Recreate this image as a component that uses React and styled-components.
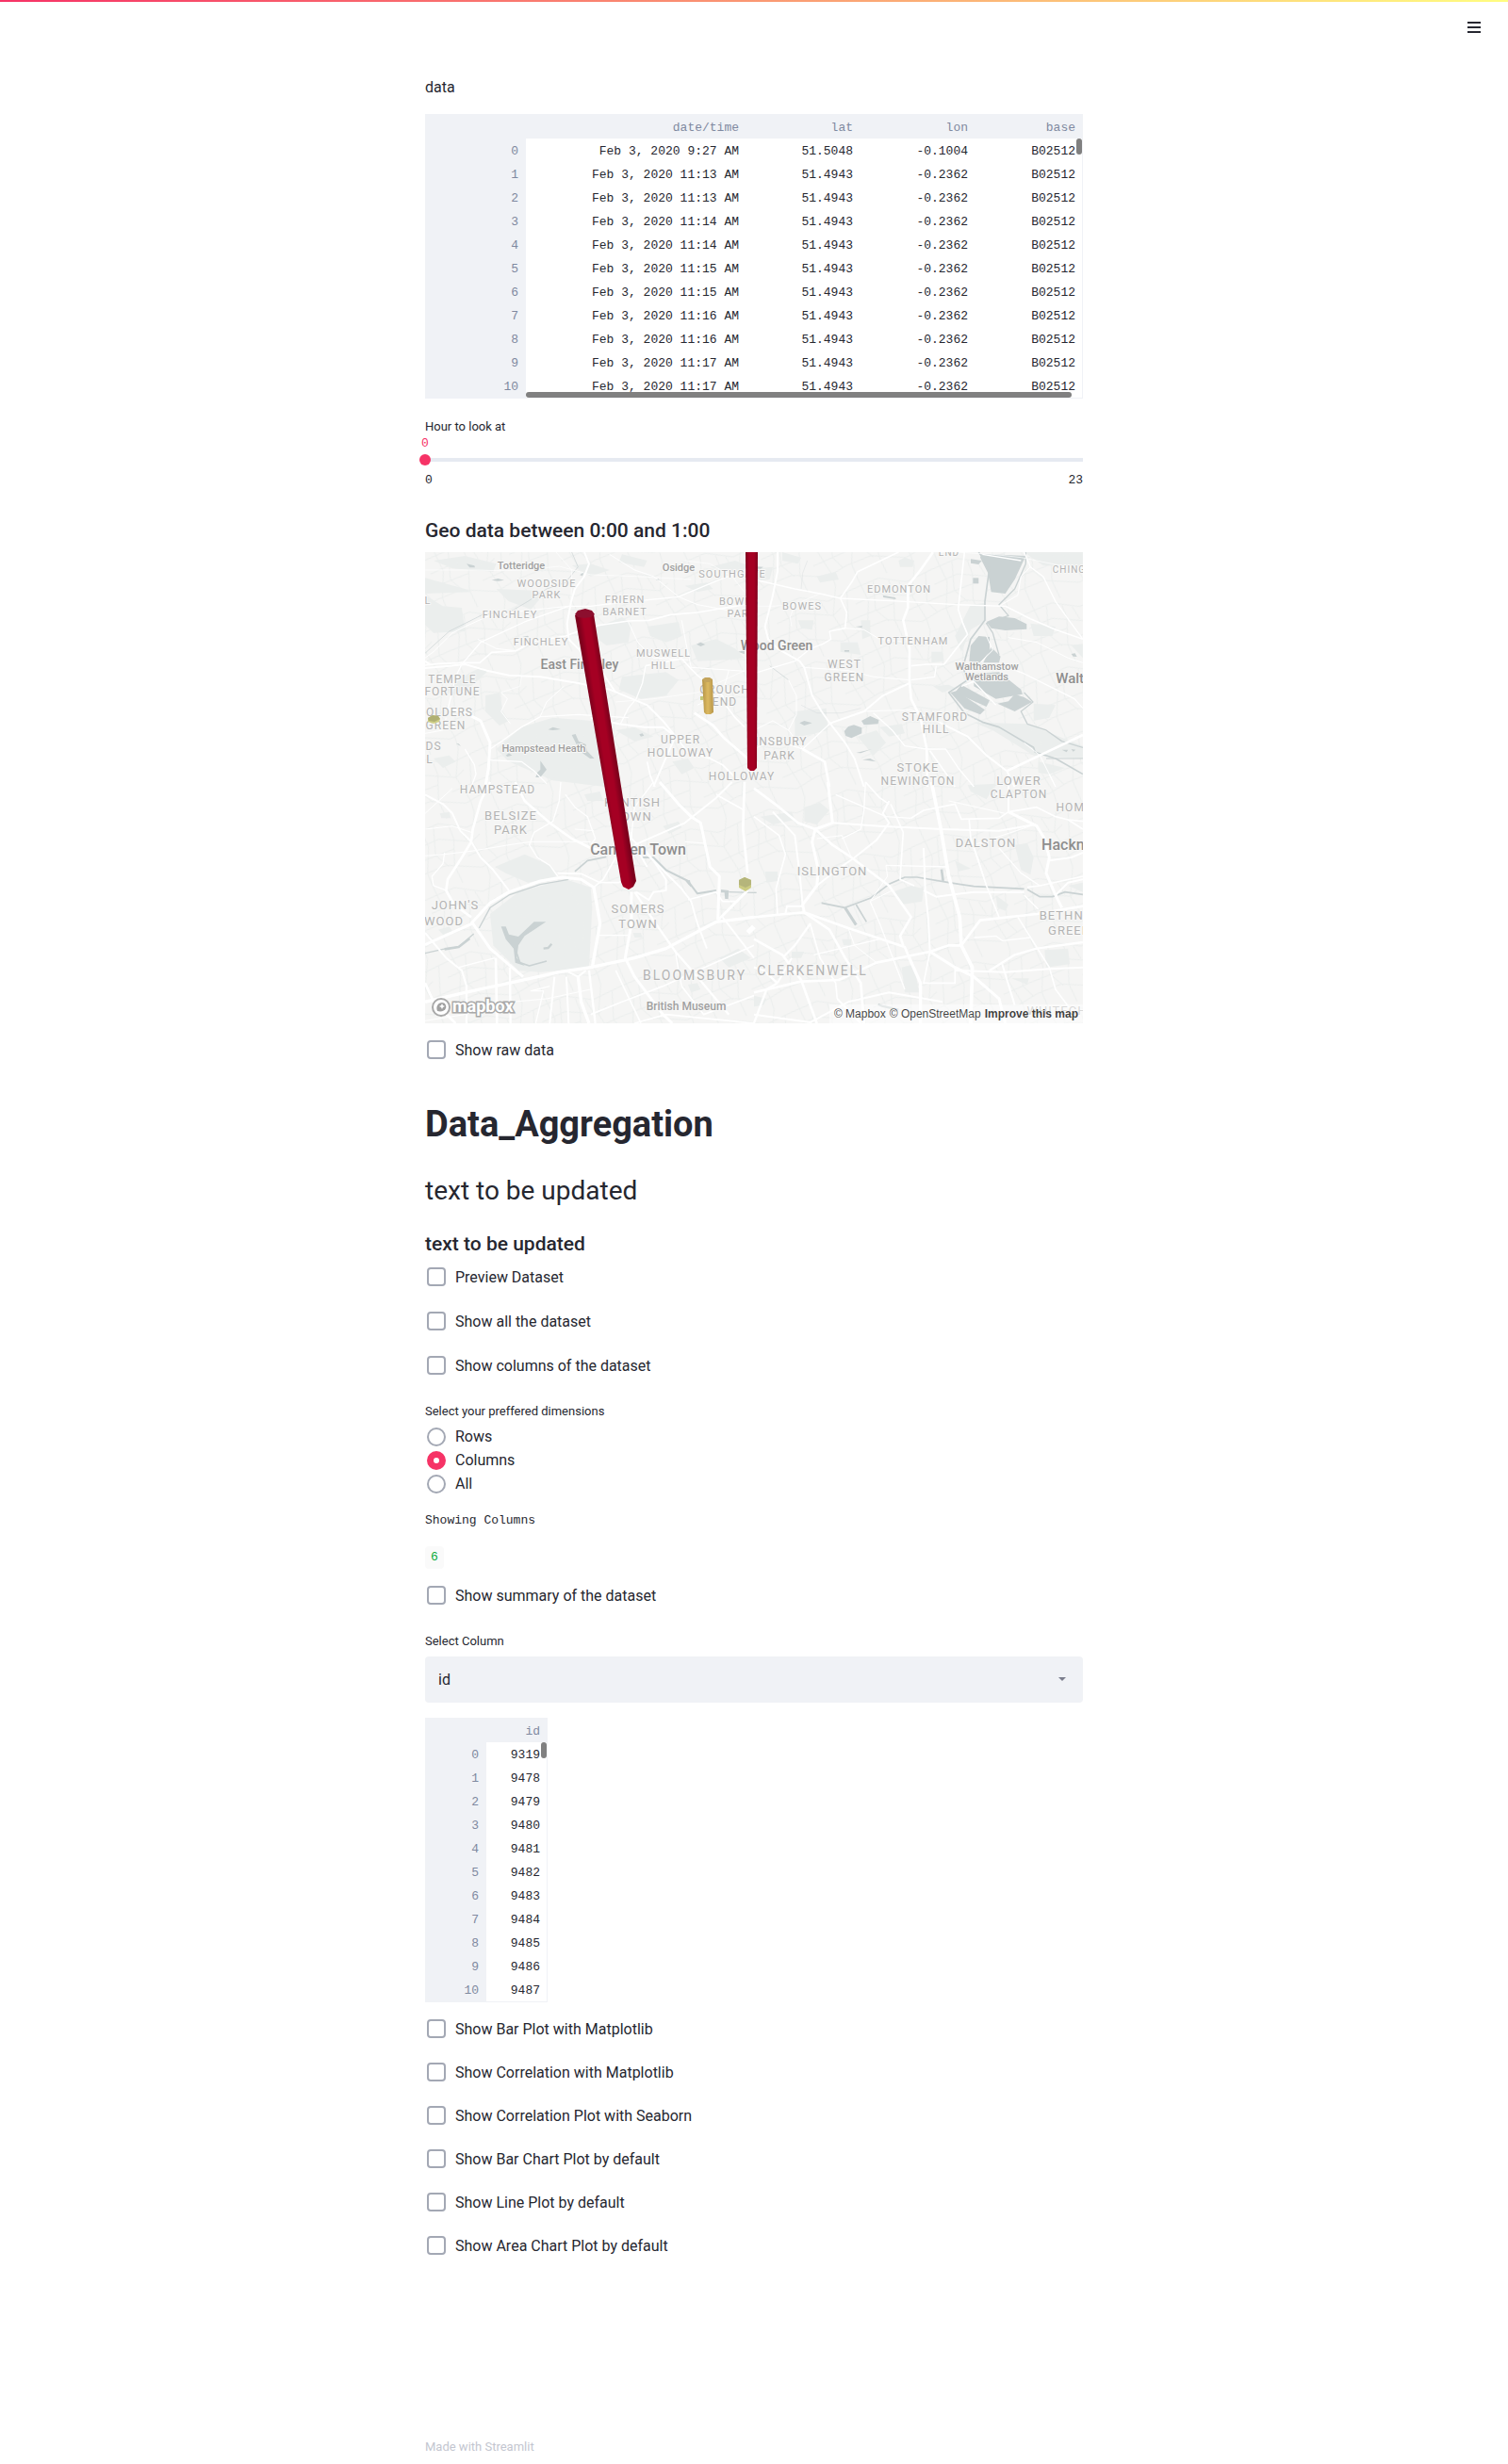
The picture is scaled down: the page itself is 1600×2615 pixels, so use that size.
import React, { useState } from "react";
import styled, { createGlobalStyle } from "styled-components";

const sans = `Roboto, "Open Sans", "Liberation Sans", sans-serif`;
const mono = `"Liberation Mono", "DejaVu Sans Mono", monospace`;
const ink = "#262730";
const panel = "#f0f2f6";
const accent = "#f63366";
const outline = "#a3a8b4";

const GlobalStyle = createGlobalStyle`
  *, *::before, *::after { box-sizing: border-box; }
  body { margin: 0; background: #fff; color: ${ink}; font: 400 16px/24px ${sans}; }
  h1, h3, p, fieldset { margin: 0; padding: 0; border: 0; }
`;

const Page = styled.div`
  display: flex;
  flex-direction: column;
  min-height: 100vh;
`;

const Header = styled.header`
  display: flex;
  justify-content: flex-end;
  align-items: flex-start;
  height: 57px;
  padding: 12px 24px 0;
  background: linear-gradient(to right, ${accent}, #fffd80) top / 100% 2px no-repeat;
`;

const MenuButton = styled.button`
  display: flex;
  padding: 8px 5px;
  border: 0;
  background: none;
  color: ${ink};
`;

const Main = styled.main`
  display: flex;
  flex: 1;
  flex-direction: column;
  gap: 16px;
  width: 100%;
  max-width: 730px;
  margin: 0 auto;
  padding: 24px 16px 0;
`;

const Title = styled.h1`
  margin: 22px 0 12px;
  font-size: 38px;
  line-height: 44px;
  font-weight: 700;
`;

const Lead = styled.p`
  font-size: 28px;
  line-height: 42px;
`;

const Subheading = styled.h3`
  margin-bottom: 8px;
  font-size: 21px;
  line-height: 30px;
  font-weight: 500;
`;

const Section = styled.section`
  padding-top: ${(p) => p.$top || 0}px;
`;

const WidgetLabel = styled.label`
  display: block;
  padding-top: 2px;
  font-size: 13px;
  line-height: 24px;
`;

/* Data frames */

const Frame = styled.div`
  position: relative;
  width: ${(p) => p.$width || "100%"};
  height: 302px;
  overflow: hidden;
  border: solid ${panel};
  border-width: 0 1px 1px 0;
`;

const Grid = styled.table`
  width: 100%;
  table-layout: fixed;
  border-collapse: collapse;
  font: 400 13px/23px ${mono};
  text-align: right;

  th, td { height: 25px; padding: 2px 8px 0; white-space: nowrap; }
  th { background: ${panel}; color: #7f89a0; font-weight: 400; }
  thead th { height: 26px; }
  td { color: ${ink}; }
`;

const ScrollThumb = styled.div`
  position: absolute;
  border-radius: 3px;
  background: #808080;
  ${(p) =>
    p.$axis === "x"
      ? "left: 107px; right: 11px; bottom: 0; height: 6px;"
      : "top: 26px; right: 0; width: 6px; height: 17px;"}
`;

function DataFrame({ columns, widths, rows, width, horizontal, label }) {
  return (
    <Frame $width={width}>
      <Grid aria-label={label}>
        <colgroup>
          {widths.map((w, i) => <col key={i} width={w} />)}
        </colgroup>
        <thead>
          <tr>
            <th aria-label="index" />
            {columns.map((c) => <th key={c} scope="col">{c}</th>)}
          </tr>
        </thead>
        <tbody>
          {rows.map((row, i) => (
            <tr key={i}>
              <th scope="row">{i}</th>
              {row.map((cell, j) => <td key={j}>{cell}</td>)}
            </tr>
          ))}
        </tbody>
      </Grid>
      <ScrollThumb $axis="y" />
      {horizontal && <ScrollThumb $axis="x" />}
    </Frame>
  );
}

const times = ["9:27", "11:13", "11:13", "11:14", "11:14", "11:15", "11:15", "11:16", "11:16", "11:17", "11:17"];
const rides = times.map((t, i) => [
  `Feb 3, 2020 ${t} AM`,
  i ? "51.4943" : "51.5048",
  i ? "-0.2362" : "-0.1004",
  "B02512",
]);
const ids = [9319, 9478, 9479, 9480, 9481, 9482, 9483, 9484, 9485, 9486, 9487].map((n) => [n]);

/* Slider */

const SliderValue = styled.output`
  display: flex;
  justify-content: center;
  width: 12px;
  margin-left: -6px;
  color: ${accent};
  font: 400 13px/12px ${mono};
`;

const Range = styled.input`
  display: block;
  appearance: none;
  width: calc(100% + 12px);
  height: 22px;
  margin: 0 -6px;
  background: linear-gradient(#e6eaf1, #e6eaf1) center / calc(100% - 12px) 4px no-repeat;

  &::-webkit-slider-thumb {
    appearance: none;
    width: 12px;
    height: 12px;
    border-radius: 50%;
    background: ${accent};
  }
`;

const Ticks = styled.div`
  display: flex;
  justify-content: space-between;
  font: 400 13px/21px ${mono};
`;

/* Check boxes and radio buttons */

const Checks = styled.div`
  display: grid;
  gap: ${(p) => p.$gap || 16}px;
`;

const CheckRow = styled.label`
  display: flex;
  align-items: flex-start;
  gap: 10px;
  height: 31px;
  padding: 2px;
  line-height: 22px;
`;

const Box = styled.input`
  appearance: none;
  flex: none;
  width: 20px;
  height: 20px;
  margin: 0;
  border: 2px solid ${outline};
  border-radius: 4px;
  background: #fff;

  &:checked { border-color: ${accent}; background: ${accent}; }
`;

const RadioRow = styled.label`
  display: flex;
  align-items: center;
  gap: 10px;
  height: 25px;
  padding-left: 2px;
`;

const Dot = styled(Box)`
  border-radius: 50%;

  &:checked { border: 7px solid ${accent}; background: #fff; }
`;

const RadioGroup = styled.fieldset`
  min-width: 0;
`;

const Legend = styled.legend`
  margin-bottom: 2px;
  padding: 2px 0 0;
  font-size: 13px;
  line-height: 24px;
`;

function Check({ children }) {
  return (
    <CheckRow>
      <Box type="checkbox" />
      {children}
    </CheckRow>
  );
}

const MonoText = styled.p`
  padding-top: 4px;
  font: 400 13px/14px ${mono};
`;

const CodeLine = styled.p`
  display: flex;
  align-items: center;
  height: 24px;
  margin-top: 4px;
`;

const Code = styled.code`
  padding: 0 6px;
  border-radius: 4px;
  background: #fafafa;
  color: #09ab3b;
  font: 400 13px/24px ${mono};
`;

/* Select */

const SelectWrap = styled.div`
  position: relative;
  margin-top: 4px;
`;

const Select = styled.select`
  appearance: none;
  display: block;
  width: 100%;
  height: 49px;
  padding: 0 14px;
  border: 0;
  border-radius: 4px;
  background: ${panel};
  color: ${ink};
  font: 400 16px/24px ${sans};
`;

const Caret = styled.svg`
  position: absolute;
  top: 22px;
  right: 18px;
  pointer-events: none;
`;

/* Map */

const MapFrame = styled.div`
  position: relative;
  height: 500px;
  overflow: hidden;
  background: #f5f5f4;
`;

const MapDrawing = styled.svg`
  display: block;
  width: 100%;
  height: 100%;
`;

const MapText = styled.text`
  fill: ${(p) => (p.$town ? "#8e8e8e" : p.$place ? "#a0a0a0" : "#b3b3b3")};
  font-family: ${sans};
  font-size: ${(p) => p.$size}px;
  font-weight: ${(p) => (p.$town || p.$place ? 500 : 400)};
  letter-spacing: ${(p) => (p.$town || p.$place ? 0 : p.$size > 13 ? 2 : 1)}px;
  text-anchor: middle;
  paint-order: stroke;
  stroke: #f8f8f7;
  stroke-width: 2px;
  stroke-linejoin: round;
`;

const LogoLink = styled.a`
  position: absolute;
  left: 6px;
  bottom: 5px;
  display: flex;
`;

const LogoText = styled.text`
  font: 700 18px/24px ${sans};
  fill: #fff;
  stroke: #a9a9a9;
  stroke-width: 3px;
  paint-order: stroke;
`;

const Attribution = styled.div`
  position: absolute;
  right: 0;
  bottom: 0;
  display: flex;
  gap: 4px;
  padding: 0 5px;
  background: rgba(255, 255, 255, 0.5);
  font: 400 12px/20px "Liberation Sans", sans-serif;

  a { color: rgba(0, 0, 0, 0.75); text-decoration: none; }
  a:last-child { font-weight: 700; }
`;

/* The map is drawn in four tiles, each at three units per pixel. */
const tiles = [
  {
    x: -11, y: -11,
    parks: [
      "33,115 160,150 180,160 33,165", "33,170 90,205 150,210 160,285 60,290 33,265", "60,60 160,45 260,70 250,95 120,85",
      "560,280 660,240 690,260 680,320 610,330 570,300", "880,330 960,310 1020,340 1050,370 1000,375 900,380",
      "170,420 210,400 230,415 180,460 120,490 100,470", "660,430 800,415 840,440 800,490 720,500 650,470",
      "260,660 340,590 440,560 560,570 600,640 605,780 440,760 300,700", "225,490 270,480 280,540 300,570 270,585 225,540",
      "940,80 1020,60 1060,75 1040,100", "860,140 930,130 950,150 900,160", "260,150 380,155 400,180 370,215 300,190",
      "740,270 840,255 850,300 800,320 750,300", "820,700 870,690 890,720 850,740", "660,40 740,60 730,80 650,65",
      "500,75 560,70 620,90 560,110", "60,690 110,680 130,700 90,720", "640,600 700,590 760,620 700,635",
    ],
    water: [
      "245,122 265,117 285,122 265,125", "165,70 190,76 192,82 175,82", "425,598 440,590 465,597 440,600",
      "500,615 512,612 522,635 545,645 548,665 572,690 558,690 530,670 540,660 515,645",
      "400,697 420,725 400,750 385,750 390,735 400,725", "290,680 300,673 310,680 295,684", "132,643 140,643 147,651",
      "897,326 910,320 925,327 910,333", "1030,350 1050,345 1050,358", "768,121 776,118 780,125", "715,613 725,610 730,617 720,620",
      "342,303 360,299 364,304", "525,106 540,96 534,108",
    ],
    rivers: [["33,355 60,330 110,285 160,260 220,230 300,225 360,190 420,150 480,130 520,80 500,33", 2]],
    roads: [
      ["33,393 75,388 150,385 207,385 245,352 322,347 375,318 480,300 560,270 680,252 745,250 815,232 900,225 1050,200", 5],
      ["33,402 110,395 160,390 230,410 300,425 400,430 520,450 620,470 740,520 790,570 830,620", 6],
      ["830,620 870,670 940,690 980,710 1030,760", 5], ["540,33 555,70 540,110 510,150 498,190 485,260 490,310 530,350 600,420 640,480", 6],
      ["33,370 60,350 120,290 160,270 250,230 490,205", 3], ["105,535 130,430 150,390 210,320 350,255 490,205 560,205 640,195 840,175 960,125 1050,90", 4],
      ["33,90 200,90 260,92 350,90 460,78 560,105 700,110 880,120", 2], ["620,40 700,90 760,110 840,175 900,200 1060,230", 3],
      ["100,530 160,545 210,570 240,640 235,720 225,780", 9], ["240,660 270,640 340,590 400,557 520,550 680,560", 4],
      ["400,555 420,510 475,460", 3], ["655,580 680,530 705,500 725,450 735,395", 4],
      ["735,395 850,372 880,405 900,425 945,460 980,490 990,520 1020,560 1050,590", 5], ["890,545 950,585 985,625 1060,690", 8],
      ["560,560 650,580 730,590 790,590 830,620 790,710 760,780", 6], ["275,480 295,500 275,540 305,580", 3],
      ["740,700 750,745 765,780", 5], ["680,255 710,320 760,370 870,375", 3], ["850,250 865,330 880,400 1050,412", 3],
      ["33,610 90,600 100,560", 3], ["160,660 190,710 195,740 180,780", 4], ["240,695 340,700 380,730 420,770", 4],
      ["450,33 500,90 498,190", 2], ["340,430 335,460 275,480", 2], ["640,510 760,500 900,480 1050,410", 2], ["900,520 980,480 1000,410", 3],
      ["33,380 50,392", 7], ["200,310 260,340 322,347", 3], ["860,60 940,70 1010,110 1050,160", 2],
    ],
    labels: [
      ["Totteridge", 338, 88, 11, "place"], ["WOODSIDE", 421, 144, 11], ["PARK", 421, 180, 11], ["Osidge", 840, 94, 11, "place"],
      ["FRIERN", 668, 195, 11], ["BARNET", 668, 234, 11], ["FINCHLEY", 304, 243, 11], ["FINCHLEY", 401, 331, 11], ["L", 42, 197, 11],
      ["MUSWELL", 793, 366, 11], ["HILL", 793, 406, 11], ["TEMPLE", 120, 450, 12], ["FORTUNE", 120, 490, 12],
      ["East Finchley", 525, 406, 14, "town"], ["OLDERS", 112, 556, 12], ["GREEN", 98, 598, 12], ["DS", 60, 662, 12], ["L", 48, 704, 12],
      ["Hampstead Heath", 410, 668, 11, "place"], ["CROUCH", 986, 482, 12], ["END", 988, 522, 12], ["UPPER", 846, 642, 12],
      ["HOLLOWAY", 846, 684, 12], ["SOUTHGATE", 1010, 115, 11], ["BOWES", 1032, 201, 11], ["PARK", 1040, 239, 11],
      ["HOLLOWAY", 1042, 758, 12],
    ],
  },
  {
    x: 349, y: -11,
    parks: [
      "130,540 230,530 235,600 130,625", "460,60 480,50 510,60 505,80 465,80", "275,320 330,320 340,360 275,350",
      "565,350 600,350 605,380 565,385", "890,515 960,520 940,560 890,570", "905,700 990,720 940,740 905,735",
      "700,575 870,580 1047,650 1047,690 890,680 760,600", "570,460 620,455 640,465 600,480", "860,33 1047,33 1047,80 920,75",
      "1010,330 1047,325 1047,370", "0,85 60,80 50,120 0,125", "140,250 190,250 185,280 150,275", "340,250 370,250 370,300 345,310",
      "690,200 735,195 740,250 690,280 660,350 640,300", "200,110 260,95 270,120 210,130", "330,620 390,600 420,640 380,680",
      "400,590 470,580 480,610 430,620", "880,260 960,270 950,300 890,300", "90,33 150,50 140,70 90,60",
    ],
    water: [
      "725,38 865,45 830,120 800,165 755,160 745,100 720,50", "690,55 725,60 715,72 690,68", "697,115 715,115 715,133 697,133",
      "740,255 780,238 830,243 868,262 868,278 800,282 755,275", "690,330 715,300 750,303 750,350 720,385 685,380",
      "755,335 785,365 780,385 730,385", "700,420 780,415 850,470 855,485 770,500 700,460", "660,455 750,505 740,525 640,480",
      "625,480 645,475 735,535 720,550 670,530", "775,515 810,508 830,485 860,495 885,510 830,540",
      "342,570 370,555 397,567 395,580 350,583", "287,603 300,588 318,583 343,592 343,610 310,625 292,618", "145,577 160,570 185,577 160,585",
      "325,672 375,660 340,673", "345,694 370,690 388,700", "410,170 450,178 452,183 412,177", "323,270 345,268 343,274",
      "288,345 303,345 303,350 288,350", "980,662 1000,662 995,670", "1010,660 1024,662 1016,668", "1010,357 1022,355 1028,366 1016,365", "0,78 30,80 20,86 0,84",
    ],
    rivers: [
      ["715,33 750,80 735,190 735,250 690,310 665,400 680,440 620,480 670,545 730,575 780,590 890,655 895,670 960,690 1047,740", 5],
      ["865,33 865,70 830,150 780,200 810,235 740,260 760,290 780,360", 4],
      ["860,480 888,510 850,540 870,580 930,600 980,635 1047,655", 4], ["930,690 1047,690", 3], ["150,150 155,100 170,60", 1],
      ["50,395 110,440", 2], ["150,520 200,545 280,545 340,530", 1],
    ],
    roads: [
      ["75,33 75,93 60,170 35,270 45,310 75,340 145,380 160,400 185,490 215,540 242,578 290,640 320,690 350,780", 6],
      ["0,120 130,150 210,165 275,180 480,190 640,200 800,205", 4], ["460,33 330,95 310,130 275,180 295,225 290,275 240,285", 5],
      ["570,33 530,90 490,140 490,210 475,250 495,340 495,440 500,500 530,560 550,660 552,780", 8],
      ["670,33 650,215 665,260 680,295 640,345 605,390 550,390 500,395", 5], ["242,578 350,540 410,490 495,450", 6],
      ["290,275 350,280 400,310 480,320", 3], ["240,285 245,310 220,325 180,340 130,380 30,410 0,420", 4],
      ["800,205 880,245 960,280 1047,310", 5], ["860,33 880,80 920,110 960,190 1010,260 1047,310", 4], ["780,205 840,170 850,110 880,80", 3],
      ["810,305 900,320 1000,370 1047,385", 3], ["780,390 860,420 960,470 1020,500 1047,530", 4], ["1047,615 910,680 805,730", 8],
      ["590,575 680,620 740,680 805,730 830,780", 6], ["0,660 60,630 155,660 242,578", 4], ["155,660 225,700 240,780", 8],
      ["380,545 440,600 480,650 550,660 610,660 650,720 700,780", 4], ["350,540 500,535 590,575", 3],
      ["110,440 135,490 135,550 110,600", 3], ["500,440 575,430 580,395", 4], ["160,400 300,410 380,430 495,440", 3],
      ["0,600 60,570 110,600 155,660", 3], ["727,40 850,60", 4], ["660,460 700,445 770,520", 4], ["640,33 760,40 850,50 1047,90", 2],
      ["120,270 115,240 130,200 210,165", 2], ["720,385 760,345 740,300", 3], ["0,205 60,205 130,200", 2], ["560,665 620,750 640,780", 5],
      ["940,740 960,780", 4], ["860,640 910,680 940,740", 3],
    ],
    labels: [
      ["END", 622, 44, 10], ["CHINGFORD", 1048, 99, 10], ["EDMONTON", 461, 163, 11], ["BOWES", 152, 217, 11], ["TOTTENHAM", 507, 327, 11],
      ["Wood Green", 72, 345, 14, "town"], ["WEST", 288, 402, 12], ["GREEN", 288, 443, 12], ["Walthamstow", 740, 408, 11, "place"],
      ["Wetlands", 740, 440, 11, "place"], ["Walthamstow", 1099, 449, 15, "town"], ["STAMFORD", 577, 569, 12], ["HILL", 578, 610, 12],
      ["FINSBURY", 74, 649, 12], ["PARK", 80, 692, 12], ["STOKE", 522, 731, 13], ["NEWINGTON", 522, 774, 12], ["LOWER", 843, 774, 13],
    ],
  },
  {
    x: -11, y: 244,
    parks: [
      "240,420 330,350 480,310 560,335 565,400 555,590 400,605 330,600 250,520", "255,270 350,230 430,265 455,300 360,320 290,290",
      "870,645 900,640 910,660 880,670", "970,560 1030,530 1070,560 1000,590", "790,140 840,125 850,145 810,165",
      "75,470 110,460 120,475 90,485", "695,480 720,480 725,495 700,495", "80,100 110,95 115,115 85,115", "540,40 590,30 600,60 550,60",
    ],
    water: [
      "275,460 290,460 300,485 330,492 380,445 418,445 380,470 350,490 330,520 325,560 350,585 320,575 315,530 290,500",
      "975,342 1000,345 998,372 988,372 986,352 975,352", "862,315 876,312 880,335 870,325",
    ],
    rivers: [
      ["325,545 335,575 365,585 420,570", 5], ["410,530 425,528 436,515", 7], ["205,465 240,400 300,360 400,326 490,310", 4],
      ["33,545 90,532 140,525 188,483", 4], ["95,532 140,525 175,498", 8], ["510,285 550,250 610,238", 5],
      ["720,240 760,240 800,280 870,315 900,355 960,345", 6], ["1000,350 1080,352", 4],
    ],
    roads: [
      ["33,40 90,70 120,100 145,155 180,190 210,240 250,280 300,345", 6], ["240,0 210,60 185,150 180,190 150,240 105,310 100,345 125,390 180,430", 8],
      ["33,150 120,140 180,160", 3], ["33,235 95,230 180,220 300,200 370,190 560,190", 3], ["320,0 350,60 430,130 500,180 560,210 600,220", 8],
      ["465,0 460,60 440,125 380,160 365,200 390,240 430,265 455,300", 4], ["480,40 510,80 550,110 575,180 560,200", 4],
      ["180,450 240,385 300,350 400,315 470,303 530,310 570,335", 9], ["455,290 530,292 590,320 650,320 700,290", 5],
      ["33,518 185,450 240,530 310,590 345,620", 9], ["33,480 100,560 150,600 165,650 165,700", 6], ["570,335 590,450 565,590", 10],
      ["33,700 160,670 300,640 460,605 560,590 700,560 800,530 960,445 1080,430", 10], ["690,350 690,450 670,560 700,620 790,740 820,768", 9],
      ["580,488 680,488", 4], ["690,160 690,180 760,250 850,340 880,380 900,450 930,530", 6], ["700,350 760,440 830,540 900,620 1000,740", 7],
      ["720,200 760,250 800,310 800,345 760,350 745,375 705,350", 6], ["780,0 840,70 880,110 910,130 940,270 970,300 965,440", 9],
      ["1050,0 1045,150 1060,290", 8], ["740,270 700,200 860,130 960,50 1010,0", 6], ["960,40 1050,90", 5], ["690,170 700,80 760,0", 4],
      ["1060,345 985,420 965,440", 8], ["870,375 960,350 980,380 1030,380", 5], ["980,430 1080,560", 6], ["258,560 262,768", 8],
      ["303,590 305,768", 7], ["165,650 165,768", 7], ["445,620 430,768", 6], ["483,620 490,768", 6], ["490,605 520,620 545,600", 6],
      ["520,620 530,700 555,768", 10], ["555,600 575,768", 7], ["640,600 720,768", 5], ["430,650 370,665 410,665 385,768", 4],
      ["33,640 60,700 130,768", 8], ["560,740 660,700 790,650 1080,520", 5], ["850,650 920,740 1080,680", 5], ["140,590 255,560", 4],
      ["33,760 160,740 310,700 420,690 560,660", 3], ["100,345 60,330 55,300 90,260 95,225", 4], ["510,150 570,155", 3], ["830,540 840,600 850,650", 4],
      ["570,335 600,310 640,240", 5], ["700,768 800,740 1080,768", 5], ["33,100 120,20", 3], ["860,190 925,195", 3], ["1080,460 1060,480", 16],
    ],
    labels: [
      ["HAMPSTEAD", 265, 36, 12], ["BELSIZE", 305, 121, 13], ["PARK", 305, 165, 13], ["KENTISH", 693, 78, 13], ["TOWN", 693, 122, 13],
      ["Camden Town", 712, 231, 16, "town"], ["JOHN'S", 130, 406, 13], ["WOOD", 94, 455, 13], ["SOMERS", 710, 416, 13], ["TOWN", 710, 465, 13],
      ["BLOOMSBURY", 892, 629, 14], ["British Museum", 864, 725, 12, "place"],
    ],
  },
  {
    x: 349, y: 244,
    parks: [
      "160,80 210,65 240,90 200,135 160,125", "680,10 770,5 740,55 690,30", "830,200 870,195 890,240 880,295 850,280",
      "440,350 500,330 540,340 535,380 470,390", "925,535 1000,530 1005,580 930,590", "35,285 75,285 75,315 40,320",
      "470,590 510,580 525,670 480,670", "820,625 875,625 870,645", "0,680 40,690 30,710 0,715", "1000,330 1047,320 1047,350",
      "120,540 160,540 150,560 120,560", "640,250 690,275 650,285", "280,500 310,500 310,520 285,520", "20,110 120,95 130,120 60,135", "770,360 810,390 800,410 775,400",
    ],
    water: [],
    rivers: [
      ["215,385 290,400 370,370 430,325 480,303 520,303 620,320 700,332 860,340", 5], ["870,342 910,365 950,365 990,350 1047,358", 5],
      ["290,400 325,455", 9], ["325,390 358,445", 5], ["597,278 602,315", 8], ["395,708 410,714 460,725", 7], ["0,352 8,352", 4],
    ],
    roads: [
      ["0,20 80,80 140,130 195,150 250,200 310,240 430,330 500,430 465,490 475,520", 8], ["235,0 250,130 195,150 185,190 205,280 200,330 155,390 160,415", 9],
      ["250,130 400,140 600,150 780,155 895,135", 6], ["355,0 350,90 340,150 280,180", 4], ["355,0 400,50 430,70", 5],
      ["430,60 410,100 430,130 390,185 320,240 250,290 200,330", 6], ["565,0 595,150 620,300 655,430 660,520 695,590 690,768", 11],
      ["435,70 475,160 465,310 510,330", 5], ["0,430 100,420 160,415 300,465 480,525 490,550", 8], ["160,415 240,470 290,560 340,640 350,768", 8],
      ["0,110 80,170 100,230 70,340 75,420", 5], ["60,95 130,170 145,290 155,390", 6], ["0,670 150,635 270,630 390,575 560,540 620,520 660,520 720,440 900,420 1047,395", 8],
      ["490,550 530,640 530,768", 10], ["560,540 640,590 700,620 780,690 800,768", 9], ["640,600 800,605 940,595 1047,590", 6],
      ["750,600 830,550 900,530 1047,510", 7], ["540,210 545,340 555,440 560,540", 6], ["420,265 620,270", 4],
      ["540,345 580,365 700,350 860,350", 6], ["685,120 690,180 740,330 780,430", 5], ["500,115 540,90 640,70 660,118 780,115 810,95 900,80 960,110 1000,120 1047,125", 5],
      ["810,0 810,95", 6], ["810,95 900,140 925,180 940,240 930,290 960,360 980,400", 9], ["870,335 910,330 1047,300", 5],
      ["960,360 1000,320 1047,310", 6], ["940,250 1010,240 1047,225", 6], ["840,430 940,590 960,660 1020,740", 5], ["790,580 830,710", 6],
      ["0,500 90,550 150,630 200,768", 8], ["180,450 130,520 95,555", 7], ["75,640 30,600 0,590", 7], ["75,640 120,560", 6],
      ["0,740 180,765 300,700 430,670 600,700", 6], ["370,380 400,450 480,660", 4], ["180,455 210,560 260,640 265,690", 5],
      ["100,420 105,395 155,395", 6], ["420,265 425,300 370,380 440,345", 3], ["260,40 420,110 500,115", 4], ["620,60 800,100", 3],
      ["560,540 540,640 640,640 640,590", 5], ["700,495 770,490 790,505 880,495", 4], ["780,210 850,290 910,330", 4], ["740,330 700,200 895,135", 3],
      ["200,180 280,170 310,240", 3], ["0,768 40,660 75,640", 7], ["265,690 340,768", 6], ["300,465 320,520 390,575", 3], ["190,550 400,500", 4],
      ["1000,120 1047,150", 5], ["860,360 905,405", 4],
    ],
    labels: [
      ["CLAPTON", 843, 52, 12], ["HOMERTON", 1072, 93, 12], ["DALSTON", 737, 208, 13], ["Hackney", 1008, 216, 16, "town"],
      ["ISLINGTON", 249, 298, 13], ["BETHNAL", 1005, 437, 13], ["GREEN", 1005, 486, 13], ["CLERKENWELL", 185, 614, 14],
      ["WHITECHAPEL", 1018, 742, 13],
    ],
  },
];

function GeoMap() {
  return (
    <MapFrame>
      <MapDrawing viewBox="0 0 698 500" preserveAspectRatio="xMidYMid slice" role="img" aria-label="Map of north London with hexagon columns">
        <defs>
          <pattern id="streets" width="86" height="70" patternUnits="userSpaceOnUse" patternTransform="rotate(-14)">
            <path
              d="M0 8 L30 3 L58 14 L86 8 M0 24 L26 19 L60 30 L70 24 M0 38 L40 33 M52 44 L86 38 M0 52 L28 48 L64 59 L86 52 M9 0 L14 24 L6 52 L9 70 M24 5 L19 35 L30 50 M40 8 L42 22 L36 50 L40 70 M50 12 L55 27 M70 0 L60 30 L69 57 L70 70 M80 9 L74 40 L82 53"
              fill="none" stroke="#ebeeed" strokeWidth="1"
            />
          </pattern>
          <linearGradient id="redColumn">
            <stop offset="0" stopColor="#7c001c" />
            <stop offset="0.3" stopColor="#a50023" />
            <stop offset="0.7" stopColor="#a50023" />
            <stop offset="1" stopColor="#7c001c" />
          </linearGradient>
          <linearGradient id="redLean" gradientUnits="userSpaceOnUse" x1="181" y1="213" x2="201" y2="210">
            <stop offset="0.1" stopColor="#7c001c" />
            <stop offset="0.4" stopColor="#a50023" />
            <stop offset="0.7" stopColor="#a50023" />
            <stop offset="1" stopColor="#7c001c" />
          </linearGradient>
          <linearGradient id="goldColumn">
            <stop offset="0" stopColor="#b39245" />
            <stop offset="0.5" stopColor="#dcb961" />
            <stop offset="1" stopColor="#b8964a" />
          </linearGradient>
        </defs>
        <rect width="698" height="500" fill="#f5f5f4" />
        {tiles.map((t, n) => (
          <g key={n} transform={`translate(${t.x} ${t.y}) scale(0.3333)`}>
            {t.parks.map((p) => <polygon key={p} points={p} fill="#ebeeed" />)}
          </g>
        ))}
        <rect width="698" height="500" fill="url(#streets)" />
        {tiles.map((t, n) => (
          <g key={n} transform={`translate(${t.x} ${t.y}) scale(0.3333)`} strokeLinejoin="round" fill="none">
            {t.water.map((p) => <polygon key={p} points={p} fill="#cad2d3" />)}
            {t.rivers.map(([p, w]) => <polyline key={p} points={p} stroke="#cad2d3" strokeWidth={w} />)}
            {t.roads.map(([p, w]) => <polyline key={p} points={p} stroke="#fff" strokeWidth={w} />)}
          </g>
        ))}
        {tiles.map((t) =>
          t.labels.map(([text, x, y, size, kind]) => (
            <MapText
              key={`${text}${x}`}
              x={Math.round(x / 3 + t.x)}
              y={Math.round(y / 3 + t.y)}
              $size={size}
              $town={kind === "town"}
              $place={kind === "place"}
            >
              {text}
            </MapText>
          ))
        )}
        <path d="M159 67 L179 66 L224 349 L221 355 L216 358 L210 355 L208 350 Z" fill="url(#redLean)" />
        <path d="M159 66 L162 62 L170 60 L177 62 L180 66 L176 69 L169 70 L162 69 Z" fill="#8c0f2e" />
        <path d="M340 0 H353 L352 229 L349 232 L345 232 L342 229 Z" fill="url(#redColumn)" />
        <path d="M292 153 h3 v4 h-3 Z" fill="#c4c878" />
        <path d="M294 135 L305 135 L306 170 L303 172 L298 172 L296 170 Z" fill="url(#goldColumn)" />
        <path d="M294 135 L297 133 H302 L305 135 L303 138 L297 138 Z" fill="#c4a45c" />
        <path d="M3 176 L8 173 L14 174 L16 177 L15 180 L9 182 L3 180 Z" fill="#cfcf85" />
        <path d="M3 176 L8 173 L14 174 L16 177 L10 180 L4 179 Z" fill="#b0b073" />
        <path d="M333 348 L339 345 L346 348 L346 356 L340 360 L333 356 Z" fill="#cccc83" />
        <path d="M333 348 L339 345 L346 348 L346 353 L340 356 L333 353 Z" fill="#b5b57b" />
      </MapDrawing>
      <LogoLink href="#mapbox" aria-label="Mapbox logo">
        <svg width="92" height="24" viewBox="0 0 92 24">
          <circle cx="11" cy="12" r="9" fill="#fff" stroke="#a9a9a9" strokeWidth="2" />
          <path d="M7 16 C5 11 8 7 12 7 C15 7 17 10 16 13 C15 16 11 17 7 16 Z" fill="#a0a0a0" />
          <path d="M12 8 L13 10 L15 11 L13 12 L12 14 L11 12 L9 11 L11 10 Z" fill="#fff" />
          <LogoText x="23" y="17">mapbox</LogoText>
        </svg>
      </LogoLink>
      <Attribution>
        <a href="#about-mapbox">© Mapbox</a>
        <a href="#openstreetmap">© OpenStreetMap</a>
        <a href="#improve">Improve this map</a>
      </Attribution>
    </MapFrame>
  );
}

const Footer = styled.footer`
  margin-top: auto;
  padding-bottom: 8px;
  color: #c3c6d0;
  font-size: 13px;
  line-height: 20px;
`;

const plots = [
  "Show Bar Plot with Matplotlib",
  "Show Correlation with Matplotlib",
  "Show Correlation Plot with Seaborn",
  "Show Bar Chart Plot by default",
  "Show Line Plot by default",
  "Show Area Chart Plot by default",
];

export default function App() {
  const [hour, setHour] = useState(0);
  const [dimension, setDimension] = useState("Columns");
  return (
    <Page>
      <GlobalStyle />
      <Header>
        <MenuButton aria-label="Menu">
          <svg width="14" height="16" viewBox="0 0 14 16" stroke="currentColor" strokeWidth="2">
            <path d="M0 4 H14 M0 9 H14 M0 14 H14" />
          </svg>
        </MenuButton>
      </Header>
      <Main>
        <p>data</p>
        <DataFrame
          label="Ride data"
          columns={["date/time", "lat", "lon", "base"]}
          widths={[107, 234, 121, 122, 114]}
          rows={rides}
          horizontal
        />
        <div>
          <WidgetLabel htmlFor="hour">Hour to look at</WidgetLabel>
          <SliderValue htmlFor="hour">{hour}</SliderValue>
          <Range id="hour" type="range" min="0" max="23" value={hour} onChange={(e) => setHour(+e.target.value)} />
          <Ticks>
            <span>0</span>
            <span>23</span>
          </Ticks>
        </div>
        <Section $top={12}>
          <Subheading>Geo data between 0:00 and 1:00</Subheading>
          <GeoMap />
        </Section>
        <Check>Show raw data</Check>
        <Title>Data_Aggregation</Title>
        <Lead>text to be updated</Lead>
        <Section $top={4}>
          <Subheading>text to be updated</Subheading>
          <Checks>
            <Check>Preview Dataset</Check>
            <Check>Show all the dataset</Check>
            <Check>Show columns of the dataset</Check>
          </Checks>
        </Section>
        <RadioGroup>
          <Legend>Select your preffered dimensions</Legend>
          {["Rows", "Columns", "All"].map((d) => (
            <RadioRow key={d}>
              <Dot type="radio" name="dimension" checked={dimension === d} onChange={() => setDimension(d)} />
              {d}
            </RadioRow>
          ))}
        </RadioGroup>
        <MonoText>Showing Columns</MonoText>
        <CodeLine>
          <Code>6</Code>
        </CodeLine>
        <Check>Show summary of the dataset</Check>
        <div>
          <WidgetLabel htmlFor="column">Select Column</WidgetLabel>
          <SelectWrap>
            <Select id="column" defaultValue="id">
              <option>id</option>
            </Select>
            <Caret width="8" height="4" viewBox="0 0 8 4" aria-hidden="true">
              <path d="M0 0 H8 L4 4 Z" fill="#7a7d8c" />
            </Caret>
          </SelectWrap>
        </div>
        <DataFrame label="Selected column" columns={["id"]} widths={[65, 65]} rows={ids} width="130px" />
        <Checks $gap={15}>
          {plots.map((p) => <Check key={p}>{p}</Check>)}
        </Checks>
        <Footer>Made with Streamlit</Footer>
      </Main>
    </Page>
  );
}
